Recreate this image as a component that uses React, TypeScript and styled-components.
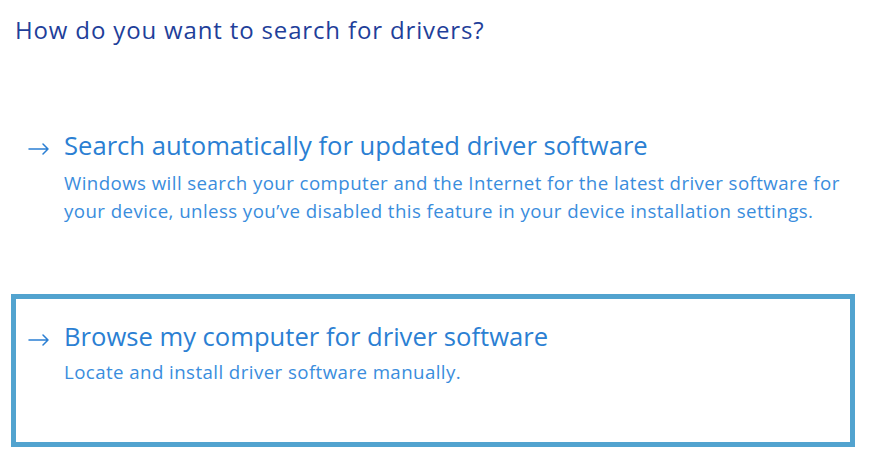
import React from "react";
import styled, { createGlobalStyle } from "styled-components";

const Global = createGlobalStyle`
  html, body { margin: 0; padding: 0; background: #ffffff; }
  body { font-family: "Open Sans", "Noto Sans", sans-serif; }
`;

const Page = styled.div`
  width: 877px;
  height: 470px;
  box-sizing: border-box;
  padding: 14px 0 0 15px;
  display: flex;
  flex-direction: column;
`;

const Title = styled.h1`
  margin: 0;
  font-size: 24px;
  font-weight: 400;
  line-height: 32px;
  letter-spacing: 0.85px;
  color: #1f3f9a;
`;

const Option = styled.div<{ $selected?: boolean; $top: number }>`
  display: flex;
  flex-direction: column;
  box-sizing: border-box;
  width: 844px;
  margin: ${(p) => p.$top}px 0 0 -4px;
  border: 5px solid ${(p) => (p.$selected ? "#52a3cf" : "transparent")};
  padding: ${(p) => (p.$selected ? "21px 0 0 12px" : "0 0 0 12px")};
  height: ${(p) => (p.$selected ? "153px" : "auto")};
`;

const Head = styled.div`
  display: flex;
  align-items: center;
  gap: 15px;
  color: #2b7fd3;
  font-size: 25.6px;
  line-height: 34px;
`;

const Arrow = styled.svg`
  width: 21px;
  height: 12px;
  flex: none;
  margin-top: 6px;
`;

const Desc = styled.div<{ $gap: number }>`
  margin-top: ${(p) => p.$gap}px;
  padding-left: 36px;
  color: #3a8ddd;
  font-size: 18.7px;
  line-height: 28px;
  letter-spacing: 0.42px;
`;

const ArrowIcon = () => (
  <Arrow viewBox="0 0 21 12" fill="none" stroke="#2b7fd3" strokeWidth="1.5" strokeLinecap="round" strokeLinejoin="round">
    <path d="M1 6H20M15 1L20 6L15 11" />
  </Arrow>
);

export default function App() {
  return (
    <>
      <Global />
      <Page>
        <Title>How do you want to search for drivers?</Title>
        <Option $top={78}>
          <Head>
            <ArrowIcon />
            <span>Search automatically for updated driver software</span>
          </Head>
          <Desc $gap={6}>
            Windows will search your computer and the Internet for the latest driver software for
            <br />
            your device, unless you’ve disabled this feature in your device installation settings.
          </Desc>
        </Option>
        <Option $selected $top={64}>
          <Head>
            <ArrowIcon />
            <span>Browse my computer for driver software</span>
          </Head>
          <Desc $gap={4}>Locate and install driver software manually.</Desc>
        </Option>
      </Page>
    </>
  );
}
